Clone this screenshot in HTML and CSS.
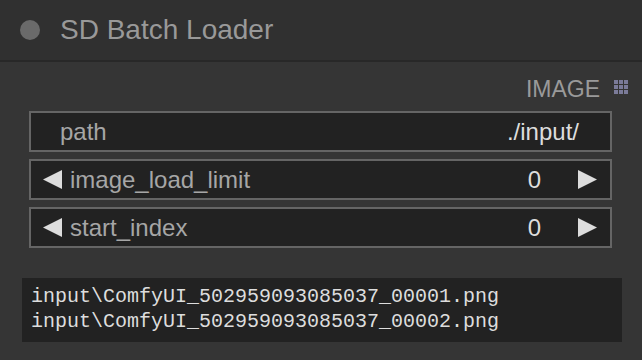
FILE: index.html
```html
<!DOCTYPE html>
<html lang="en">
  <head>
    <meta charset="UTF-8" />
    <title>SD Batch Loader</title>
    <link rel="stylesheet" href="styles.css">
  </head>
  <body>
    <!-- Node -->
    <div class="node">
      <!-- Title bar -->
      <div class="title-bar">
        <div class="dot"></div>
        <div class="title">SD Batch Loader</div>
      </div>

      <!-- Output slot -->
      <div class="outputs">
        <span class="slot-name">IMAGE</span>
        <svg class="slot-grid" width="14" height="14" viewBox="0 0 14 14">
          <rect x="0" y="0" width="4" height="4" />
          <rect x="5" y="0" width="4" height="4" />
          <rect x="10" y="0" width="4" height="4" />
          <rect x="0" y="5" width="4" height="4" />
          <rect x="5" y="5" width="4" height="4" />
          <rect x="10" y="5" width="4" height="4" />
          <rect x="0" y="10" width="4" height="4" />
          <rect x="5" y="10" width="4" height="4" />
          <rect x="10" y="10" width="4" height="4" />
        </svg>
      </div>

      <!-- Widgets -->
      <div class="widgets">
        <div class="widget text-widget">
          <span class="label">path</span>
          <span class="value">./input/</span>
        </div>
        <div class="widget number-widget">
          <svg class="arrow" width="19" height="19" viewBox="0 0 19 19"><polygon points="0,9.5 19,0 19,19" /></svg>
          <span class="label">image_load_limit</span>
          <span class="value">0</span>
          <svg class="arrow" width="19" height="19" viewBox="0 0 19 19"><polygon points="19,9.5 0,0 0,19" /></svg>
        </div>
        <div class="widget number-widget">
          <svg class="arrow" width="19" height="19" viewBox="0 0 19 19"><polygon points="0,9.5 19,0 19,19" /></svg>
          <span class="label">start_index</span>
          <span class="value">0</span>
          <svg class="arrow" width="19" height="19" viewBox="0 0 19 19"><polygon points="19,9.5 0,0 0,19" /></svg>
        </div>
      </div>

      <!-- Loaded files -->
      <div class="output-box">
        <div>input\ComfyUI_502959093085037_00001.png</div>
        <div>input\ComfyUI_502959093085037_00002.png</div>
      </div>
    </div>
  </body>
</html>
```

FILE: styles.css
```css
/* Reset */
html,
body {
  margin: 0;
  padding: 0;
  background: #353535;
  font-family: "Liberation Sans", Arial, sans-serif;
  height: 100%;
  overflow: hidden;
}

/* Node body */
.node {
  width: 100%;
  height: 100%;
  background: #353535;
  display: flex;
  flex-direction: column;
}

/* Title bar */
.title-bar {
  height: 60px;
  display: flex;
  align-items: center;
  gap: 20px;
  padding-left: 20px;
  background: #303030;
  border-bottom: 2px solid #282828;
}

.dot {
  width: 20px;
  height: 20px;
  border-radius: 50%;
  background: #6a6a6a;
}

.title {
  font-size: 28px;
  line-height: 28px;
  color: #999999;
}

/* Output slot row */
.outputs {
  display: flex;
  justify-content: flex-end;
  align-items: flex-start;
  gap: 14px;
  padding: 16px 14px 10px 0;
}

.slot-name {
  font-size: 23px;
  line-height: 23px;
  color: #9a9a9a;
}

.slot-grid {
  margin-top: 2px;
  fill: #7b7b99;
}

/* Widgets */
.widgets {
  display: flex;
  flex-direction: column;
  gap: 7px;
  margin: 0 30px 0 29px;
}

.widget {
  height: 37px;
  display: flex;
  align-items: center;
  background: #222222;
  border: 2px solid #656565;
  font-size: 24px;
  line-height: 24px;
}

.widget .label {
  flex: 1;
  color: #a6a6a6;
}

.widget .value {
  color: #dddddd;
}

.text-widget {
  padding: 0 31px 0 29px;
}

.number-widget {
  padding: 0 13px 0 12px;
}

.number-widget .label {
  margin-left: 8px;
}

.number-widget .value {
  margin-right: 37px;
}

.arrow {
  fill: #dddddd;
  flex-shrink: 0;
}

/* Loaded files list */
.output-box {
  margin: 30px 20px 0 22px;
  padding: 6px 9px 8px;
  background: #222222;
  color: #dddddd;
  font-family: "Liberation Mono", "Courier New", monospace;
  font-size: 20px;
  line-height: 25px;
}
```
